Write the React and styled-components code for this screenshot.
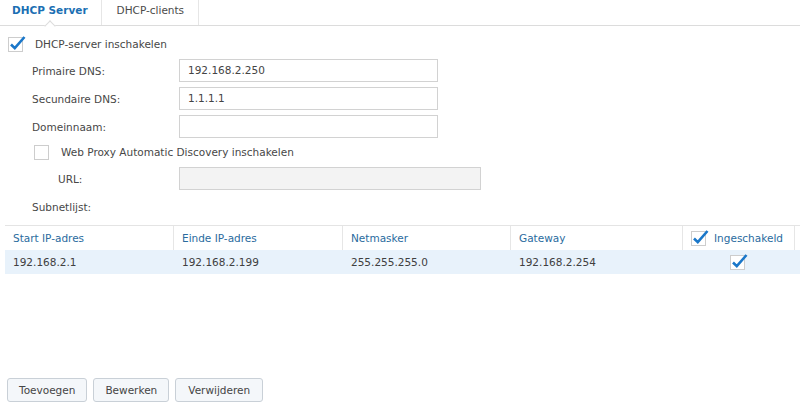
import React from "react";
import styled, { createGlobalStyle } from "styled-components";

const Global = createGlobalStyle`
  body {
    margin: 0;
    background: #fff;
    font-family: "DejaVu Sans", Verdana, sans-serif;
    font-size: 10.5px;
    color: #474747;
  }
`;

const Page = styled.div`
  width: 800px;
  height: 420px;
  display: flex;
  flex-direction: column;
  overflow: hidden;
`;

const TabBar = styled.div`
  display: flex;
  height: 25px;
  border-bottom: 1px solid #dcdcdc;
`;

const Tab = styled.div`
  position: relative;
  padding: 0 ${(p) => (p.active ? "13px" : "14px")} 0 ${(p) => (p.active ? "12px" : "15px")};
  line-height: 21px;
  border-right: 1px solid #e6e6e6;
  color: ${(p) => (p.active ? "#1b6fb3" : "#4a4a4a")};
  font-weight: ${(p) => (p.active ? "bold" : "normal")};

  &::after {
    content: "";
    display: ${(p) => (p.active ? "block" : "none")};
    position: absolute;
    left: 50%;
    bottom: -1px;
    width: 7px;
    height: 7px;
    margin-left: -4px;
    background: #fff;
    border-left: 1px solid #dcdcdc;
    border-top: 1px solid #dcdcdc;
    transform: translateY(4px) rotate(45deg);
  }
`;

const Form = styled.div`
  padding: 10px 0 0 8px;
  display: flex;
  flex-direction: column;
`;

const CheckRow = styled.div`
  display: flex;
  align-items: center;
  gap: 9px;
  height: 16px;
  margin-left: ${(p) => p.indent || 0}px;
  margin-top: ${(p) => p.top || 0}px;
`;

const Field = styled.div`
  display: flex;
  align-items: center;
  height: 23px;
  margin-top: ${(p) => p.top || 5}px;
`;

const Label = styled.div`
  width: ${(p) => p.w}px;
  padding-left: ${(p) => p.indent}px;
  box-sizing: border-box;
`;

const Input = styled.div`
  box-sizing: border-box;
  width: ${(p) => p.w}px;
  height: 23px;
  border: 1px solid #d2d2d2;
  background: ${(p) => (p.disabled ? "#f3f3f3" : "#fff")};
  padding-left: 8px;
  line-height: 21px;
  color: #444;
`;

const Subnet = styled.div`
  margin: 11px 0 0 24px;
  height: 14px;
`;

const Table = styled.div`
  margin: 10px 0 0 5px;
  border-top: 1px solid #e4e4e4;
`;

const Row = styled.div`
  display: grid;
  grid-template-columns: 169px 169px 168px 172px 112px;
  height: 24px;
  align-items: center;
  background: ${(p) => (p.head ? "#fff" : "#e8f2fb")};
  color: ${(p) => (p.head ? "#2a6b9e" : "#404040")};
`;

const Cell = styled.div`
  height: 100%;
  display: flex;
  align-items: center;
  gap: 5px;
  padding-left: ${(p) => (p.center ? 0 : 8)}px;
  justify-content: ${(p) => (p.center ? "center" : "flex-start")};
  border-right: ${(p) => (p.head ? "1px solid #e6e6e6" : "none")};
  box-sizing: border-box;
`;

const Footer = styled.div`
  margin-top: auto;
  padding: 0 0 18px 7px;
  display: flex;
  gap: 6px;
`;

const Button = styled.div`
  box-sizing: border-box;
  height: 24px;
  padding: 0 ${(p) => p.pad}px;
  border: 1px solid #c9d0d7;
  border-radius: 3px;
  background: #f4f7fa;
  line-height: 22px;
  color: #454545;
`;

const Check = ({ checked }) => (
  <svg width="18" height="18" viewBox="0 0 18 18" style={{ flex: "none", marginTop: -2 }}>
    <rect x="0.5" y="3.5" width="14" height="14" fill="#fff" stroke="#cdcdcd" />
    {checked && (
      <path d="M3 10.5 L6.8 14.2 L16.5 3" fill="none" stroke="#1a77c9" strokeWidth="2.6" />
    )}
  </svg>
);

const rows = [
  ["Primaire DNS:", "192.168.2.250"],
  ["Secundaire DNS:", "1.1.1.1"],
  ["Domeinnaam:", ""],
];

export default function App() {
  return (
    <Page>
      <Global />
      <TabBar>
        <Tab active>DHCP Server</Tab>
        <Tab>DHCP-clients</Tab>
      </TabBar>
      <Form>
        <CheckRow>
          <Check checked />
          DHCP-server inschakelen
        </CheckRow>
        {rows.map(([l, v], i) => (
          <Field key={l} top={i === 0 ? 7 : 5}>
            <Label w={171} indent={24}>{l}</Label>
            <Input w={259}>{v}</Input>
          </Field>
        ))}
        <CheckRow indent={26} top={6}>
          <Check />
          Web Proxy Automatic Discovery inschakelen
        </CheckRow>
        <Field top={7}>
          <Label w={171} indent={50}>URL:</Label>
          <Input w={302} disabled />
        </Field>
        <Subnet>Subnetlijst:</Subnet>
      </Form>
      <Table>
        <Row head>
          <Cell head>Start IP-adres</Cell>
          <Cell head>Einde IP-adres</Cell>
          <Cell head>Netmasker</Cell>
          <Cell head>Gateway</Cell>
          <Cell head>
            <Check checked />
            Ingeschakeld
          </Cell>
        </Row>
        <Row>
          <Cell>192.168.2.1</Cell>
          <Cell>192.168.2.199</Cell>
          <Cell>255.255.255.0</Cell>
          <Cell>192.168.2.254</Cell>
          <Cell center>
            <Check checked />
          </Cell>
        </Row>
      </Table>
      <Footer>
        <Button pad={11}>Toevoegen</Button>
        <Button pad={11}>Bewerken</Button>
        <Button pad={12}>Verwijderen</Button>
      </Footer>
    </Page>
  );
}
